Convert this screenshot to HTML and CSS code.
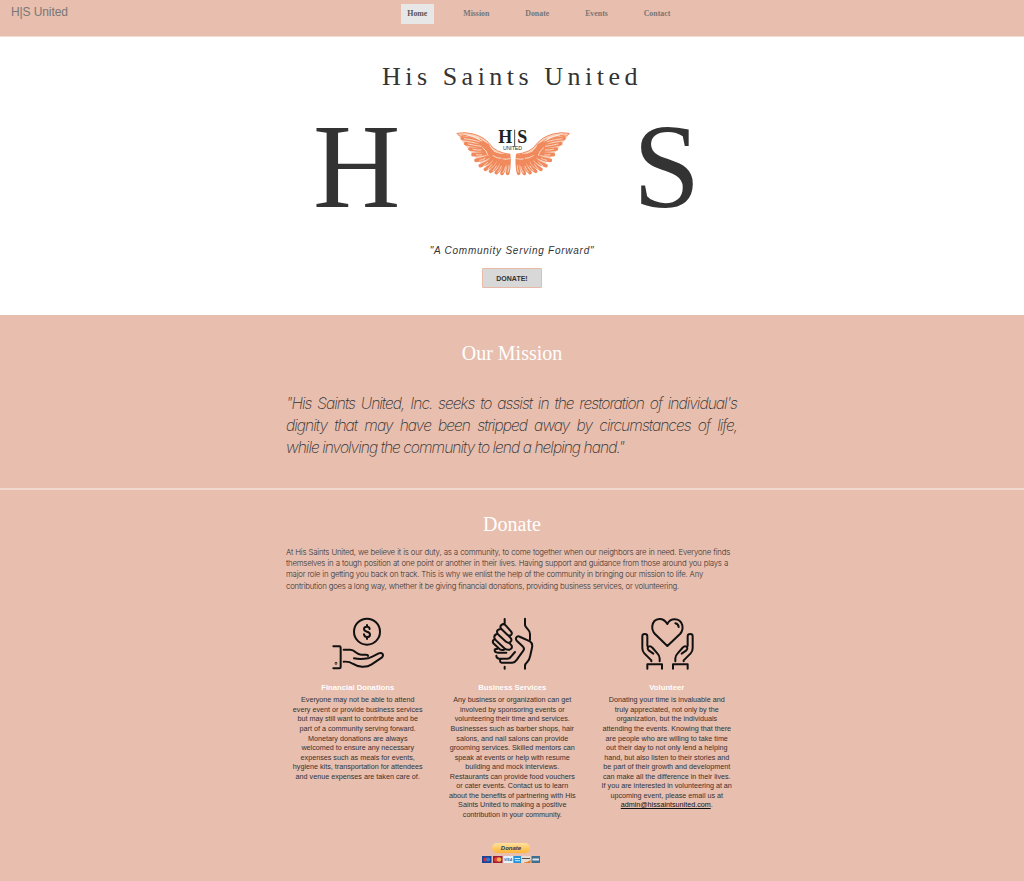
FILE: index.html
```html
<!DOCTYPE html>
<html lang="en">
<head>
<meta charset="utf-8">
<title>His Saints United</title>
<link rel="stylesheet" href="styles.css">
</head>
<body>
<header class="bar">
  <a class="brand">H|S United</a>
  <nav class="nav"><a class="on">Home</a><a>Mission</a><a>Donate</a><a>Events</a><a>Contact</a></nav>
</header>
<section class="hero">
  <h1>His Saints United</h1>
  <div class="marks">
    <span class="letter">H</span>
    <svg class="logo" viewBox="0 0 405 210">
      <defs>
        <g id="wing" fill="none" stroke-linecap="round">
          <path fill="#fbd3bd" d="M36 55Q60 50 85 57Q118 66 135 88Q150 112 195 118L193 174L150 168L112 150L72 105L45 70Z"/>
          <g stroke="#f08a5d" stroke-width="11">
            <path d="M128 92Q90 72 52 70M131 99Q95 92 62 86M135 105Q105 107 75 102M140 110Q115 120 84 119M144 114Q128 132 93 136M150 117Q138 143 106 152M157 119Q150 150 121 163M165 121Q163 152 137 169M173 122Q174 157 154 173M181 122Q184 152 171 175M191 122Q194 152 188 175"/>
          </g>
          <g stroke="#fde3d5" stroke-width="2.5">
            <path d="M104 80Q78 73 58 71M108 94Q90 92 70 87M108 105Q98 106 84 103M110 120Q105 121 94 119M120 130Q114 135 104 136M128 142Q123 147 116 152M140 149Q136 155 129 162M154 153Q151 160 144 167M169 154Q165 164 159 171M182 155Q180 165 174 173M192 152Q193 162 189 171"/>
          </g>
          <path stroke="#f08a5d" stroke-width="3" d="M36 55Q60 50 85 57Q118 66 135 88Q150 112 195 118M38 58Q50 70 82 66M50 60Q90 62 125 94M105 72Q126 82 143 108"/>
          <path stroke="#fff" stroke-width="2" d="M66 60Q92 64 110 78M113 98Q125 106 129 121M144 122Q157 131 168 130M174 132Q183 134 194 131"/>
        </g>
      </defs>
      <use href="#wing"/><use href="#wing" transform="translate(409 0) scale(-1 1)"/>
      <text class="lg-serif" x="160" y="83" textLength="42" lengthAdjust="spacingAndGlyphs">H</text>
      <path stroke="#222" stroke-width="2.5" d="M209 44V95"/>
      <text class="lg-serif" x="217" y="83" textLength="30" lengthAdjust="spacingAndGlyphs">S</text>
      <text class="lg-sans" x="174" y="105" textLength="57">UNITED</text>
    </svg>
    <span class="letter">S</span>
  </div>
  <p class="tag">"A Community Serving Forward"</p>
  <a class="btn">DONATE!</a>
</section>
<section class="mission">
  <h2>Our Mission</h2>
  <blockquote><span>"His Saints United, Inc. seeks to assist in the restoration of individual's</span><span>dignity that may have been stripped away by circumstances of life,</span><span class="w3">while involving the community to lend a helping hand."</span></blockquote>
</section>
<section class="donate">
  <h2>Donate</h2>
  <p class="intro"><span class="i1">At His Saints United, we believe it is our duty, as a community, to come together when our neighbors are in need. Everyone finds</span><span class="i2">themselves in a tough position at one point or another in their lives. Having support and guidance from those around you plays a</span><span class="i3">major role in getting you back on track. This is why we enlist the help of the community in bringing our mission to life. Any</span><span class="i4">contribution goes a long way, whether it be giving financial donations, providing business services, or volunteering.</span></p>
  <div class="cols">
    <article>
      <svg class="ico" viewBox="-7 0 210 210"><circle cx="125" cy="65" r="39"/><path d="M133 57Q132 50 125 50Q116 50 116 57Q116 63 125 65Q134 67 134 74Q134 81 125 81Q117 81 116 73M125 45V50M125 81V87M24 109H42Q46 109 46 113V171Q46 175 42 175H24M55 119H75Q83 119 90 126Q99 134 108 134H122Q128 134 128 138M86 145Q105 149 128 145Q138 142 160 130Q168 127 172 132Q175 138 169 143L139 163Q127 171 110 170Q94 169 82 161Q73 154 55 155"/><circle cx="32" cy="160" r="1"/></svg>
      <h3>Financial Donations</h3>
      <p>Everyone may not be able to attend<br>every event or provide business services<br>but may still want to contribute and be<br>part of a community serving forward.<br>Monetary donations are always<br>welcomed to ensure any necessary<br>expenses such as meals for events,<br>hygiene kits, transportation for attendees<br>and venue expenses are taken care of.</p>
    </article>
    <article>
      <svg class="ico" viewBox="-8 0 210 210"><path d="M75 27V43M136 26V45Q137 51 143 56Q151 64 151 73V89M75 170V176M136 176V168Q136 162 142 157Q150 148 152 136L157 113Q160 100 151 94L122 81Q112 76 109 84Q108 89 112 93L128 108Q136 115 131 122L110 151Q106 158 98 158H66Q61 157 61 152Q61 147 66 146H83Q90 146 94 140L106 126M63 146H58Q50 144 50 137M80 128H55Q45 128 45 121Q45 116 52 117M65 45Q72 39 78 46L94 64Q99 70 94 75Q89 79 83 74L66 58Q59 51 65 45ZM60 58Q52 59 52 66Q52 71 58 76L79 95Q85 101 92 96Q99 91 92 83L83 74M51 72Q43 75 44 83Q45 87 49 91L74 115Q81 121 90 119Q99 116 96 107L88 98M43 89Q37 93 41 100L57 115Q62 121 70 120Q76 119 75 116"/></svg>
      <h3>Business Services</h3>
      <p>Any business or organization can get<br>involved by sponsoring events or<br>volunteering their time and services.<br>Businesses such as barber shops, hair<br>salons, and nail salons can provide<br>grooming services. Skilled mentors can<br>speak at events or help with resume<br>building and mock interviews.<br>Restaurants can provide food vouchers<br>or cater events. Contact us to learn<br>about the benefits of partnering with His<br>Saints United to making a positive<br>contribution in your community.</p>
    </article>
    <article>
      <svg class="ico" viewBox="0 0 210 210"><path d="M106 42Q96 26 82 27Q63 29 61 48Q59 61 69 72L106 108L144 72Q154 61 151 46Q146 28 128 28Q113 28 106 42M130 40Q139 42 140 51"/><g id="palm"><path d="M58 154V151L37 130Q31 124 31 114V79Q31 72 38 72Q46 72 46 79V108M64 131L50 121Q44 114 50 110Q55 107 62 114L76 130Q83 137 83 145V154M46 176V163H90V176"/></g><use href="#palm" transform="translate(213 0) scale(-1 1)"/></svg>
      <h3>Volunteer</h3>
      <p>Donating your time is invaluable and<br>truly appreciated, not only by the<br>organization, but the individuals<br>attending the events. Knowing that there<br>are people who are willing to take time<br>out their day to not only lend a helping<br>hand, but also listen to their stories and<br>be part of their growth and development<br>can make all the difference in their lives.<br>If you are interested in volunteering at an<br>upcoming event, please email us at<br><a>admin@hissaintsunited.com</a>.</p>
    </article>
  </div>
  <div class="pay">
    <span class="pp">Donate</span>
    <svg class="cards" viewBox="0 0 58 7">
      <rect width="9.5" height="7" fill="#15459a"/><circle cx="3.4" cy="3.5" r="2.1" fill="#e52534"/><circle cx="6.1" cy="3.5" r="2.1" fill="#337bd0"/>
      <rect x="11" width="9.5" height="7" fill="#9b1c35"/><circle cx="14.4" cy="3.5" r="2.3" fill="#ea3d35"/><circle cx="17.1" cy="3.5" r="2.3" fill="#f4b451"/>
      <rect x="21.5" width="9.5" height="7" fill="#e5f1fb"/><text x="22" y="5" class="visa">VISA</text>
      <rect x="31.5" width="7.5" height="7" fill="#2592d5"/><path d="M32.5 2.5H38M33 4.7H38" stroke="#c9eafa"/>
      <rect x="39.5" width="9" height="7" fill="#e6ded6"/><path d="M40 2.5H48" stroke="#594e4b"/><path d="M42 6.5Q46 6 48.5 4V7H42Z" fill="#e87922"/>
      <rect x="49.5" width="8.5" height="7" fill="#416e8e"/><path d="M50.5 3.5H57" stroke="#d8e7eb" stroke-width="2"/>
    </svg>
  </div>
</section>
</body>
</html>
```
FILE: styles.css
```css
* { box-sizing: border-box; margin: 0; padding: 0; }
body { width: 1024px; height: 881px; overflow: hidden; background: #e8beae; color: #333; font-family: "Liberation Sans", Arial, sans-serif; }
.bar { display: grid; grid-template-columns: 401px 1fr; height: 37px; border-bottom: 1px solid #f3ded6; align-items: start; }
.brand { padding: 5px 0 0 11px; font-size: 12px; letter-spacing: -.1px; line-height: 14px; color: #777; }
.nav { display: flex; gap: 23.3px; padding-top: 4px; font: bold 7.85px/20px "Liberation Serif", serif; color: #777; }
.nav a { padding: 0 6.3px; }
.nav .on { background: #e7e7e7; color: #555; }
.hero { height: 278px; background: #fff; display: flex; flex-direction: column; align-items: center; }
h1, h2 { font-family: "Liberation Serif", "Times New Roman", serif; font-weight: 400; }
h1 { margin-top: 25px; font-size: 26px; line-height: 30px; letter-spacing: 4.5px; white-space: nowrap; }
.marks { display: grid; grid-template-columns: 130px 135px 1fr; width: 394px; height: 130px; margin-top: 9px; }
.letter { margin-left: -2px; font: 121px/130px "Liberation Serif", serif; }
.letter:last-child { padding-left: 55px; }
.logo { width: 135px; height: 70px; margin-top: 14px; }
.lg-serif { font: bold 55px "Liberation Serif", serif; fill: #222; }
.lg-sans { font: 16px "Liberation Sans", sans-serif; fill: #333; }
.tag { margin-top: 14px; font-size: 10px; line-height: 12px; font-style: italic; letter-spacing: .75px; white-space: nowrap; }
.btn { width: 60px; height: 20px; margin-top: 11px; border: 1px solid #e8b9a6; border-radius: 1px; background: #d8d8d8; font-size: 7px; line-height: 19px; font-weight: bold; text-align: center; }
.mission { height: 175px; padding-top: 26px; border-bottom: 2px solid #f2d9d0; }
h2 { color: #fff; font-size: 20px; line-height: 24px; text-align: center; }
blockquote { width: 451px; margin: 28px 0 0 286px; font: italic 200 15.6px/22px Inter, sans-serif; letter-spacing: -.97px; }
blockquote span, .intro span { display: block; white-space: nowrap; text-align-last: justify; }
blockquote .w3 { width: 338px; }
.donate { padding-top: 22px; }
.intro { width: 460px; margin: 11px 0 0 286px; font: 300 7.8px/11.2px Inter, sans-serif; letter-spacing: -.22px; }
.i1 { width: 444px; }
.i2 { width: 442px; }
.i3 { width: 417px; }
.i4 { width: 393px; }
.cols { display: grid; grid-template-columns: repeat(3, 154.5px); margin: 18px 0 0 280.5px; height: 233px; }
article { display: flex; flex-direction: column; align-items: center; text-align: center; }
.ico { width: 70px; height: 70px; fill: none; stroke: #111; stroke-width: 6; stroke-linecap: round; stroke-linejoin: round; }
h3 { margin-top: 3px; color: #fff; font-size: 7.7px; line-height: 9px; }
article p { margin-top: 3.5px; font-size: 7.2px; line-height: 9.55px; white-space: nowrap; }
article p a { text-decoration: underline; color: #111; }
.pay { display: flex; flex-direction: column; align-items: center; width: 1022px; }
.pp { width: 38px; height: 10px; border-radius: 5px; background: linear-gradient(#ffe2a0, #ffb434); font-size: 6px; line-height: 10px; font-weight: bold; font-style: italic; text-align: center; color: #253b66; }
.cards { width: 58px; height: 7px; margin-top: 3px; }
.visa { font: italic bold 3.5px "Liberation Sans", sans-serif; fill: #1267ac; }
```
